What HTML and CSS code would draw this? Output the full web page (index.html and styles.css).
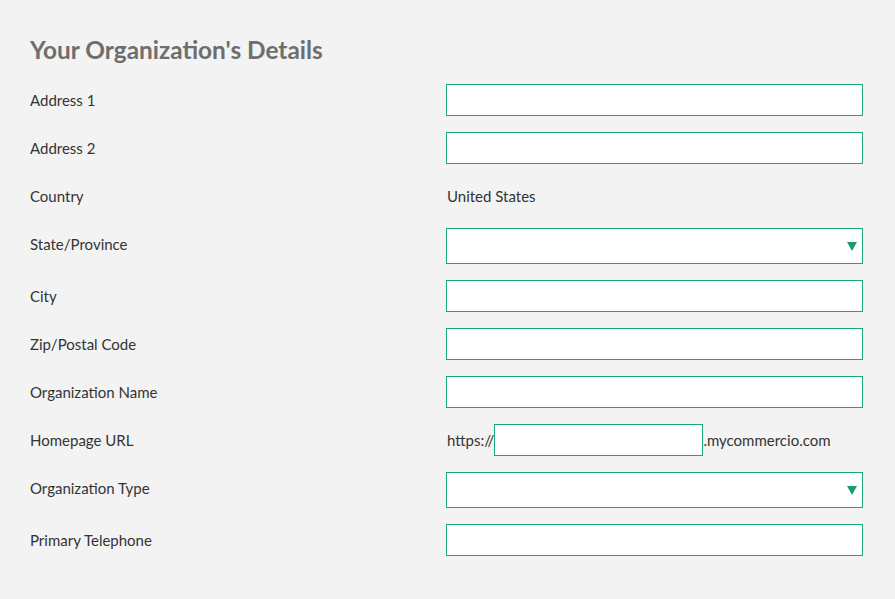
FILE: index.html
```html
<!DOCTYPE html>
<html lang="en">
<head>
<meta charset="utf-8">
<title>Your Organization's Details</title>
<link rel="stylesheet" href="styles.css">
</head>
<body>
<main class="panel">
  <h1 class="panel-title">Your Organization's Details</h1>
  <form class="details-form">
    <label class="field-label" for="addr1">Address 1</label>
    <div class="field"><input class="text-input" id="addr1" type="text"></div>

    <label class="field-label" for="addr2">Address 2</label>
    <div class="field"><input class="text-input" id="addr2" type="text"></div>

    <span class="field-label">Country</span>
    <div class="field field-static">United States</div>

    <label class="field-label" for="state">State/Province</label>
    <div class="field">
      <div class="select-box">
        <select id="state" class="select-input"><option></option></select>
        <span class="select-arrow"></span>
      </div>
    </div>

    <label class="field-label" for="city">City</label>
    <div class="field"><input class="text-input" id="city" type="text"></div>

    <label class="field-label" for="zip">Zip/Postal Code</label>
    <div class="field"><input class="text-input" id="zip" type="text"></div>

    <label class="field-label" for="orgname">Organization Name</label>
    <div class="field"><input class="text-input" id="orgname" type="text"></div>

    <label class="field-label" for="url">Homepage URL</label>
    <div class="field field-url">
      <span class="url-part">https://</span><input class="text-input url-input" id="url" type="text"><span class="url-part">.mycommercio.com</span>
    </div>

    <label class="field-label" for="orgtype">Organization Type</label>
    <div class="field">
      <div class="select-box">
        <select id="orgtype" class="select-input"><option></option></select>
        <span class="select-arrow"></span>
      </div>
    </div>

    <label class="field-label" for="phone">Primary Telephone</label>
    <div class="field"><input class="text-input" id="phone" type="text"></div>
  </form>
</main>
</body>
</html>
```
FILE: styles.css
```css
html, body {
  margin: 0;
  padding: 0;
  background: #f3f3f3;
}

body {
  font-family: Lato, "Open Sans", sans-serif;
  color: #333333;
  font-size: 15px;
}

.panel {
  padding: 35px 32px 40px 30px;
}

.panel-title {
  margin: 0 0 20px 0;
  font-size: 24.4px;
  line-height: 29px;
  font-weight: 700;
  color: #6e6e6e;
}

.details-form {
  display: grid;
  grid-template-columns: 416px 417px;
  row-gap: 16px;
}

.field-label {
  line-height: 32px;
  align-self: start;
}

.field {
  min-height: 32px;
  display: flex;
  align-items: center;
}

.field-static {
  line-height: 32px;
  padding-left: 1px;
}

.text-input {
  box-sizing: border-box;
  width: 100%;
  height: 32px;
  margin: 0;
  border: 1px solid #1aa878;
  background: #ffffff;
  font: inherit;
  padding: 0 8px;
  outline: none;
}

.field-url {
  padding-left: 1px;
  white-space: nowrap;
}

.url-input {
  width: 209px;
  flex: none;
}

.select-box {
  position: relative;
  width: 100%;
  height: 36px;
}

.select-input {
  appearance: none;
  -webkit-appearance: none;
  box-sizing: border-box;
  width: 100%;
  height: 36px;
  margin: 0;
  border: 1px solid #1aa878;
  border-radius: 0;
  background: #ffffff;
  font: inherit;
  padding: 0 8px;
  outline: none;
}

.select-arrow {
  position: absolute;
  right: 6px;
  top: 14px;
  width: 0;
  height: 0;
  border-left: 5px solid transparent;
  border-right: 5px solid transparent;
  border-top: 9px solid #1b9a6e;
  pointer-events: none;
}
```
